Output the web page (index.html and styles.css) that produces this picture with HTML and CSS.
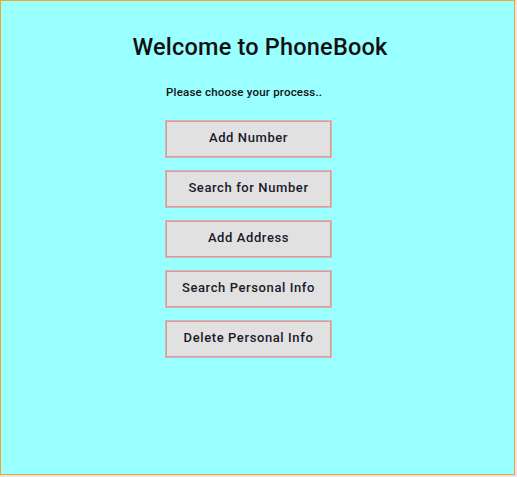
FILE: index.html
```html
<!DOCTYPE html>
<html>
<head>
<meta charset="utf-8">
<link rel="stylesheet" href="styles.css">
</head>
<body>
<div class="frame">
  <h1 class="title">Welcome to PhoneBook</h1>
  <div class="menu">
    <p class="prompt">Please choose your process..</p>
    <button class="btn">Add Number</button>
    <button class="btn">Search for Number</button>
    <button class="btn">Add Address</button>
    <button class="btn">Search Personal Info</button>
    <button class="btn">Delete Personal Info</button>
  </div>
</div>
</body>
</html>
```
FILE: styles.css
```css
html, body {
  margin: 0;
  padding: 0;
  background: #e4e4f6;
}
body {
  font-family: Roboto, "Liberation Sans", Arial, sans-serif;
  color: #111;
}
.frame {
  box-sizing: border-box;
  width: 515px;
  height: 475px;
  border: 1px solid #f5a623;
  background: #99ffff;
  padding-top: 32px;
}
.title {
  margin: 0 0 0 5px;
  text-align: center;
  font-size: 23.5px;
  font-weight: 500;
  line-height: 28px;
  letter-spacing: 0.2px;
}
.menu {
  margin: 24px 0 0 164px;
  width: 167px;
  display: flex;
  flex-direction: column;
  gap: 12px;
}
.prompt {
  margin: 0 0 9px 1px;
  font-size: 11.5px;
  font-weight: 500;
  line-height: 14px;
  letter-spacing: 0.2px;
}
.btn {
  box-sizing: border-box;
  height: 38px;
  width: 167px;
  background: #e1e1e1;
  border: 1px solid #f4a7a7;
  box-shadow: inset 0 0 0 1px #b9a9a9;
  font-family: Roboto, "Liberation Sans", Arial, sans-serif;
  font-size: 13px;
  font-weight: 500;
  letter-spacing: 0.6px;
  color: #1a1a2a;
  padding: 0 0 3px 0;
}
```
